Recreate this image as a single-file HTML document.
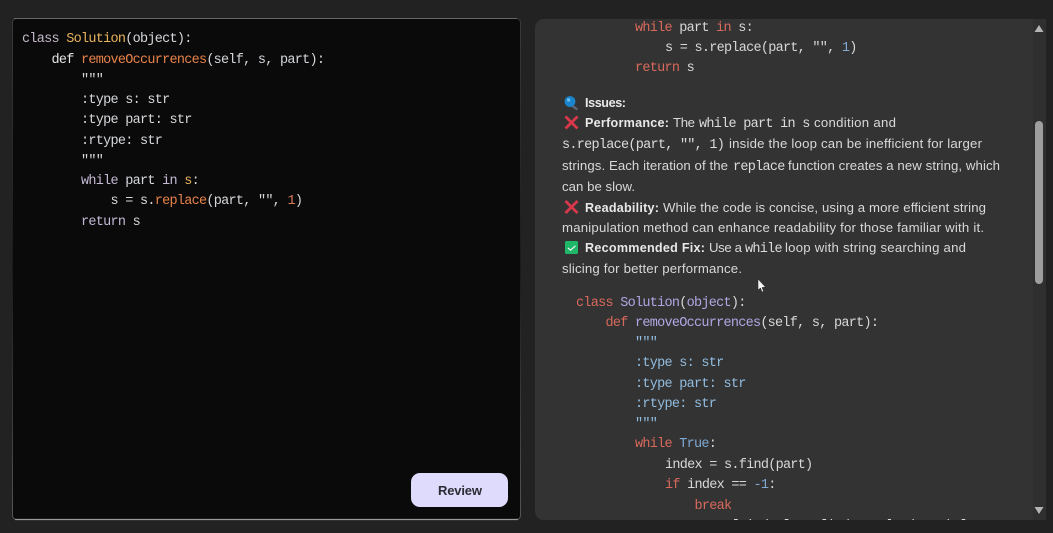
<!DOCTYPE html>
<html><head><meta charset="utf-8"><style>
html,body{margin:0;padding:0;width:1053px;height:533px;background:#222;overflow:hidden}
svg{display:block;filter:blur(0.3px)}
text{white-space:pre}
.m{font-family:"Liberation Mono",monospace;font-size:13.5px;letter-spacing:-0.73px}
.s{font-family:"Liberation Sans",sans-serif;font-size:13.2px;fill:#d8d8d8}
.b{font-family:"Liberation Sans",sans-serif;font-size:12.6px;font-weight:bold;fill:#e8e8e8}
.l{fill:#d6d8dc}
.r{fill:#d8d8d8}
.tm{fill:#dcdcdc}
</style></head><body>
<svg width="1053" height="533" viewBox="0 0 1053 533" xmlns="http://www.w3.org/2000/svg">
<defs><linearGradient id="bd" x1="0" y1="0" x2="0" y2="1"><stop offset="0" stop-color="#3a3a3a"/><stop offset="0.5" stop-color="#1a1a1a"/><stop offset="1" stop-color="#555"/></linearGradient>
<clipPath id="rc"><path d="M544 19H1033V520H544A9 9 0 0 1 535 511V28A9 9 0 0 1 544 19Z"/></clipPath></defs>
<rect width="1053" height="533" fill="#222"/>
<rect x="12.5" y="18.5" width="508" height="501" rx="4" fill="#0a0a0a" stroke="url(#bd)"/>
<path d="M14 18.5H517" stroke="#666" stroke-width="1"/>
<path d="M15 519.5H518" stroke="#999" stroke-width="1.2"/>
<g class="m l">
<text x="22" y="42"><tspan fill="#c4b8c8">class</tspan> <tspan fill="#e8b45e">Solution</tspan>(object):</text>
<text x="51.5" y="63"><tspan fill="#e6e6e6">def</tspan> <tspan fill="#e8824a">removeOccurrences</tspan>(self, s, part):</text>
<text x="81" y="83">"""</text>
<text x="81" y="103">:type s: str</text>
<text x="81" y="123">:type part: str</text>
<text x="81" y="144">:rtype: str</text>
<text x="81" y="164">"""</text>
<text x="81" y="184"><tspan fill="#c4b8d4">while</tspan> part <tspan fill="#c4b8d4">in</tspan> <tspan fill="#e8b45e">s</tspan>:</text>
<text x="110.5" y="204">s = s.<tspan fill="#e8824a">replace</tspan>(part, "", <tspan fill="#dc7c58">1</tspan>)</text>
<text x="81" y="225"><tspan fill="#c4b8d4">return</tspan> s</text>
</g>
<rect x="411" y="473" width="97" height="34" rx="9" fill="#dfdbfd"/>
<text x="438" y="495" font-family="Liberation Sans,sans-serif" font-size="13" font-weight="bold" fill="#2c2c34" textLength="44">Review</text>

<path d="M544 19H1033V520H544A9 9 0 0 1 535 511V28A9 9 0 0 1 544 19Z" fill="#333"/>
<rect x="1033" y="19" width="13" height="501" fill="#2f2f2f"/>
<g clip-path="url(#rc)">
<g class="m r">
<text x="635" y="31"><tspan fill="#d9695c">while</tspan> part <tspan fill="#d9695c">in</tspan> s:</text>
<text x="665" y="51">s = s.replace(part, "", <tspan fill="#7fa9d4">1</tspan>)</text>
<text x="635" y="71"><tspan fill="#d9695c">return</tspan> s</text>
<text x="576" y="306"><tspan fill="#d9695c">class</tspan> <tspan fill="#b0a8e4">Solution</tspan>(<tspan fill="#b0a8e4">object</tspan>):</text>
<text x="605.5" y="326"><tspan fill="#d9695c">def</tspan> <tspan fill="#b0a8e4">removeOccurrences</tspan>(self, s, part):</text>
<g fill="#92bde0">
<text x="635" y="346">"""</text>
<text x="635" y="366">:type s: str</text>
<text x="635" y="387">:type part: str</text>
<text x="635" y="407">:rtype: str</text>
<text x="635" y="427">"""</text>
</g>
<text x="635" y="447"><tspan fill="#d9695c">while</tspan> <tspan fill="#7fa9d4">True</tspan>:</text>
<text x="665" y="468">index = s.find(part)</text>
<text x="665" y="488"><tspan fill="#d9695c">if</tspan> index == <tspan fill="#7fa9d4">-1</tspan>:</text>
<text x="694.5" y="509" fill="#d9695c">break</text>
<text x="694.5" y="529">s = s[:index] + s[index + len(part):]</text>
</g>

<text class="b" x="585" y="107" textLength="41">Issues:</text>
<text class="b" x="585" y="127" textLength="84">Performance:</text>
<text class="s" x="673" y="127" textLength="22">The</text>
<text class="m tm" x="699" y="127">while part in s</text>
<text class="s" x="814" y="127" textLength="82">condition and</text>
<text class="m tm" x="562" y="148">s.replace(part, "", 1)</text>
<text class="s" x="729" y="148" textLength="253">inside the loop can be inefficient for larger</text>
<text class="s" x="562" y="170" textLength="166">strings. Each iteration of the</text>
<text class="m tm" x="733" y="170">replace</text>
<text class="s" x="788" y="170" textLength="212">function creates a new string, which</text>
<text class="s" x="562" y="191" textLength="73">can be slow.</text>
<text class="b" x="585" y="212" textLength="74">Readability:</text>
<text class="s" x="663" y="212" textLength="323">While the code is concise, using a more efficient string</text>
<text class="s" x="562" y="232" textLength="422">manipulation method can enhance readability for those familiar with it.</text>
<text class="b" x="585" y="252" textLength="120">Recommended Fix:</text>
<text class="s" x="709" y="252" textLength="33">Use a</text>
<text class="m tm" x="745" y="252">while</text>
<text class="s" x="785" y="252" textLength="181">loop with string searching and</text>
<text class="s" x="562" y="273" textLength="180">slicing for better performance.</text>

<!-- magnifier -->
<path d="M570.5 104.5L576.5 109" stroke="#5b6472" stroke-width="2.5" stroke-linecap="round"/>
<circle cx="570" cy="101.5" r="5.4" fill="#1a85cc"/>
<circle cx="568.6" cy="100" r="1.6" fill="#6cc0ee"/>
<!-- crosses -->
<path d="M565.5 116.5L577.5 128.5M577.5 116.5L565.5 128.5" stroke="#d8384a" stroke-width="2.8"/>
<path d="M565.5 201L577.5 213M577.5 201L565.5 213" stroke="#d8384a" stroke-width="2.8"/>
<!-- check -->
<rect x="565" y="241" width="13" height="13" rx="1.5" fill="#1fb868"/>
<path d="M568 248L570.5 250.2L575.5 245.8" fill="none" stroke="#f0f0f0" stroke-width="1.2"/>
</g>
<!-- scrollbar -->
<path d="M1039 25L1043.5 32H1034.5Z" fill="#b4b4b4"/>
<rect x="1035" y="121" width="8" height="163" rx="4" fill="#9e9e9e"/>
<path d="M1034.5 507H1043.5L1039 514Z" fill="#b4b4b4"/>
<!-- cursor -->
<path d="M758 279V290L760.5 288L762 292L763.6 291.2L762 287.5L765.5 287.2Z" fill="#f4f4f4" stroke="#222" stroke-width="0.5"/>
</svg>
</body></html>
